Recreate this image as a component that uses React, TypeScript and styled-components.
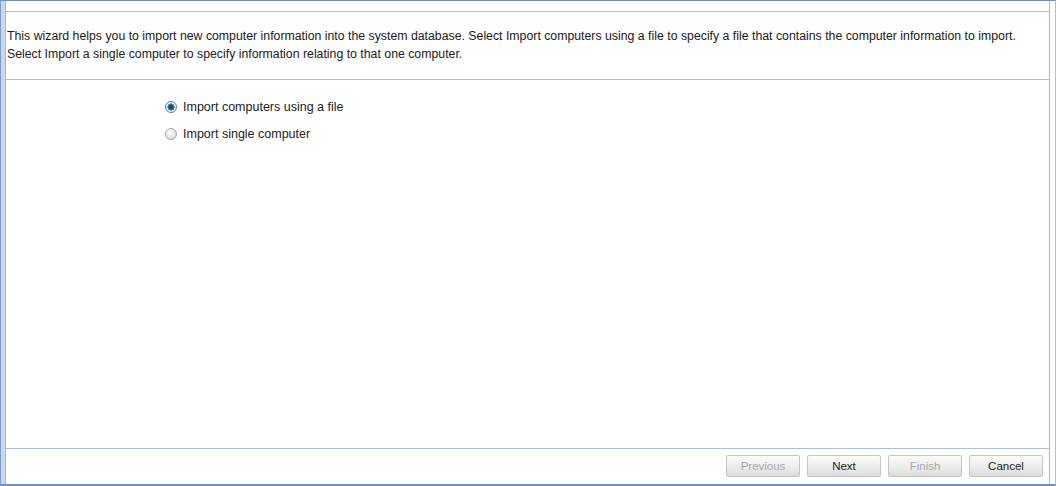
import React from "react";
import styled, { createGlobalStyle } from "styled-components";

const Global = createGlobalStyle`
  html, body { margin: 0; padding: 0; background: #ffffff; }
  body { font-family: Arial, "Liberation Sans", sans-serif; font-size: 12px; color: #222; }
`;

const Frame = styled.div`
  box-sizing: border-box;
  width: 1056px;
  height: 486px;
  display: flex;
  border-top: 1px solid #6f8fbf;
  border-bottom: 2px solid #6f8fbf;
  border-left: 1px solid #7e9cc8;
  border-right: 1px solid #a8bfdf;
  background: #ffffff;
`;

const SideStrip = styled.div`
  width: 4px;
  flex: none;
  background: #c9d8ee;
`;

const Column = styled.div`
  box-sizing: border-box;
  width: 1045px;
  flex: none;
  display: flex;
  flex-direction: column;
  border-left: 1px solid #9fb9de;
  border-right: 1px solid #9fb9de;
  padding-top: 10px;
`;

const Description = styled.div`
  box-sizing: border-box;
  height: 69px;
  border-top: 1px solid #a6bfe2;
  border-bottom: 1px solid #a6bfe2;
  padding: 15px 0 0 1px;
  line-height: 18px;
  font-size: 12.3px;
  color: #1c1a22;
`;

const Options = styled.div`
  flex: 1;
  display: flex;
  flex-direction: column;
  gap: 9px;
  padding: 18px 0 0 159px;
  border-bottom: 1px solid #a6bfe2;
`;

const OptionRow = styled.label`
  display: flex;
  align-items: center;
  gap: 6px;
  height: 18px;
  font-size: 12.5px;
  color: #222;
`;

const RadioDot = styled.span<{ $checked?: boolean }>`
  box-sizing: border-box;
  width: 12px;
  height: 12px;
  border-radius: 50%;
  border: 1px solid ${(p) => (p.$checked ? "#6b7b8a" : "#a7a7a7")};
  background: ${(p) =>
    p.$checked
      ? "radial-gradient(circle, #0e4f74 0 2.2px, #3d86b0 2.8px 3.4px, #eef3f7 3.8px)"
      : "radial-gradient(circle at 40% 35%, #ffffff 0, #dcdcdc 70%)"};
  flex: none;
`;

const ButtonBar = styled.div`
  box-sizing: border-box;
  height: 35px;
  flex: none;
  display: flex;
  justify-content: flex-end;
  align-items: flex-start;
  gap: 7px;
  padding: 6px 6px 0 0;
`;

const Button = styled.button<{ $disabled?: boolean }>`
  box-sizing: border-box;
  width: 74px;
  height: 22px;
  border: 1px solid #c5c5c5;
  border-radius: 2px;
  background: linear-gradient(#fbfbfb, #ececec 55%, #dcdcdc);
  font-family: Arial, "Liberation Sans", sans-serif;
  font-size: 11.5px;
  color: ${(p) => (p.$disabled ? "#a8a8a8" : "#222")};
  padding: 0;
  cursor: default;
`;

export default function App() {
  return (
    <>
      <Global />
      <Frame>
        <SideStrip />
        <Column>
          <Description>
            This wizard helps you to import new computer information into the system database. Select Import computers using a file to specify a file that contains the computer information to import.
            <br />
            Select Import a single computer to specify information relating to that one computer.
          </Description>
          <Options>
            <OptionRow>
              <RadioDot $checked />
              Import computers using a file
            </OptionRow>
            <OptionRow>
              <RadioDot />
              Import single computer
            </OptionRow>
          </Options>
          <ButtonBar>
            <Button $disabled>Previous</Button>
            <Button>Next</Button>
            <Button $disabled>Finish</Button>
            <Button>Cancel</Button>
          </ButtonBar>
        </Column>
      </Frame>
    </>
  );
}
